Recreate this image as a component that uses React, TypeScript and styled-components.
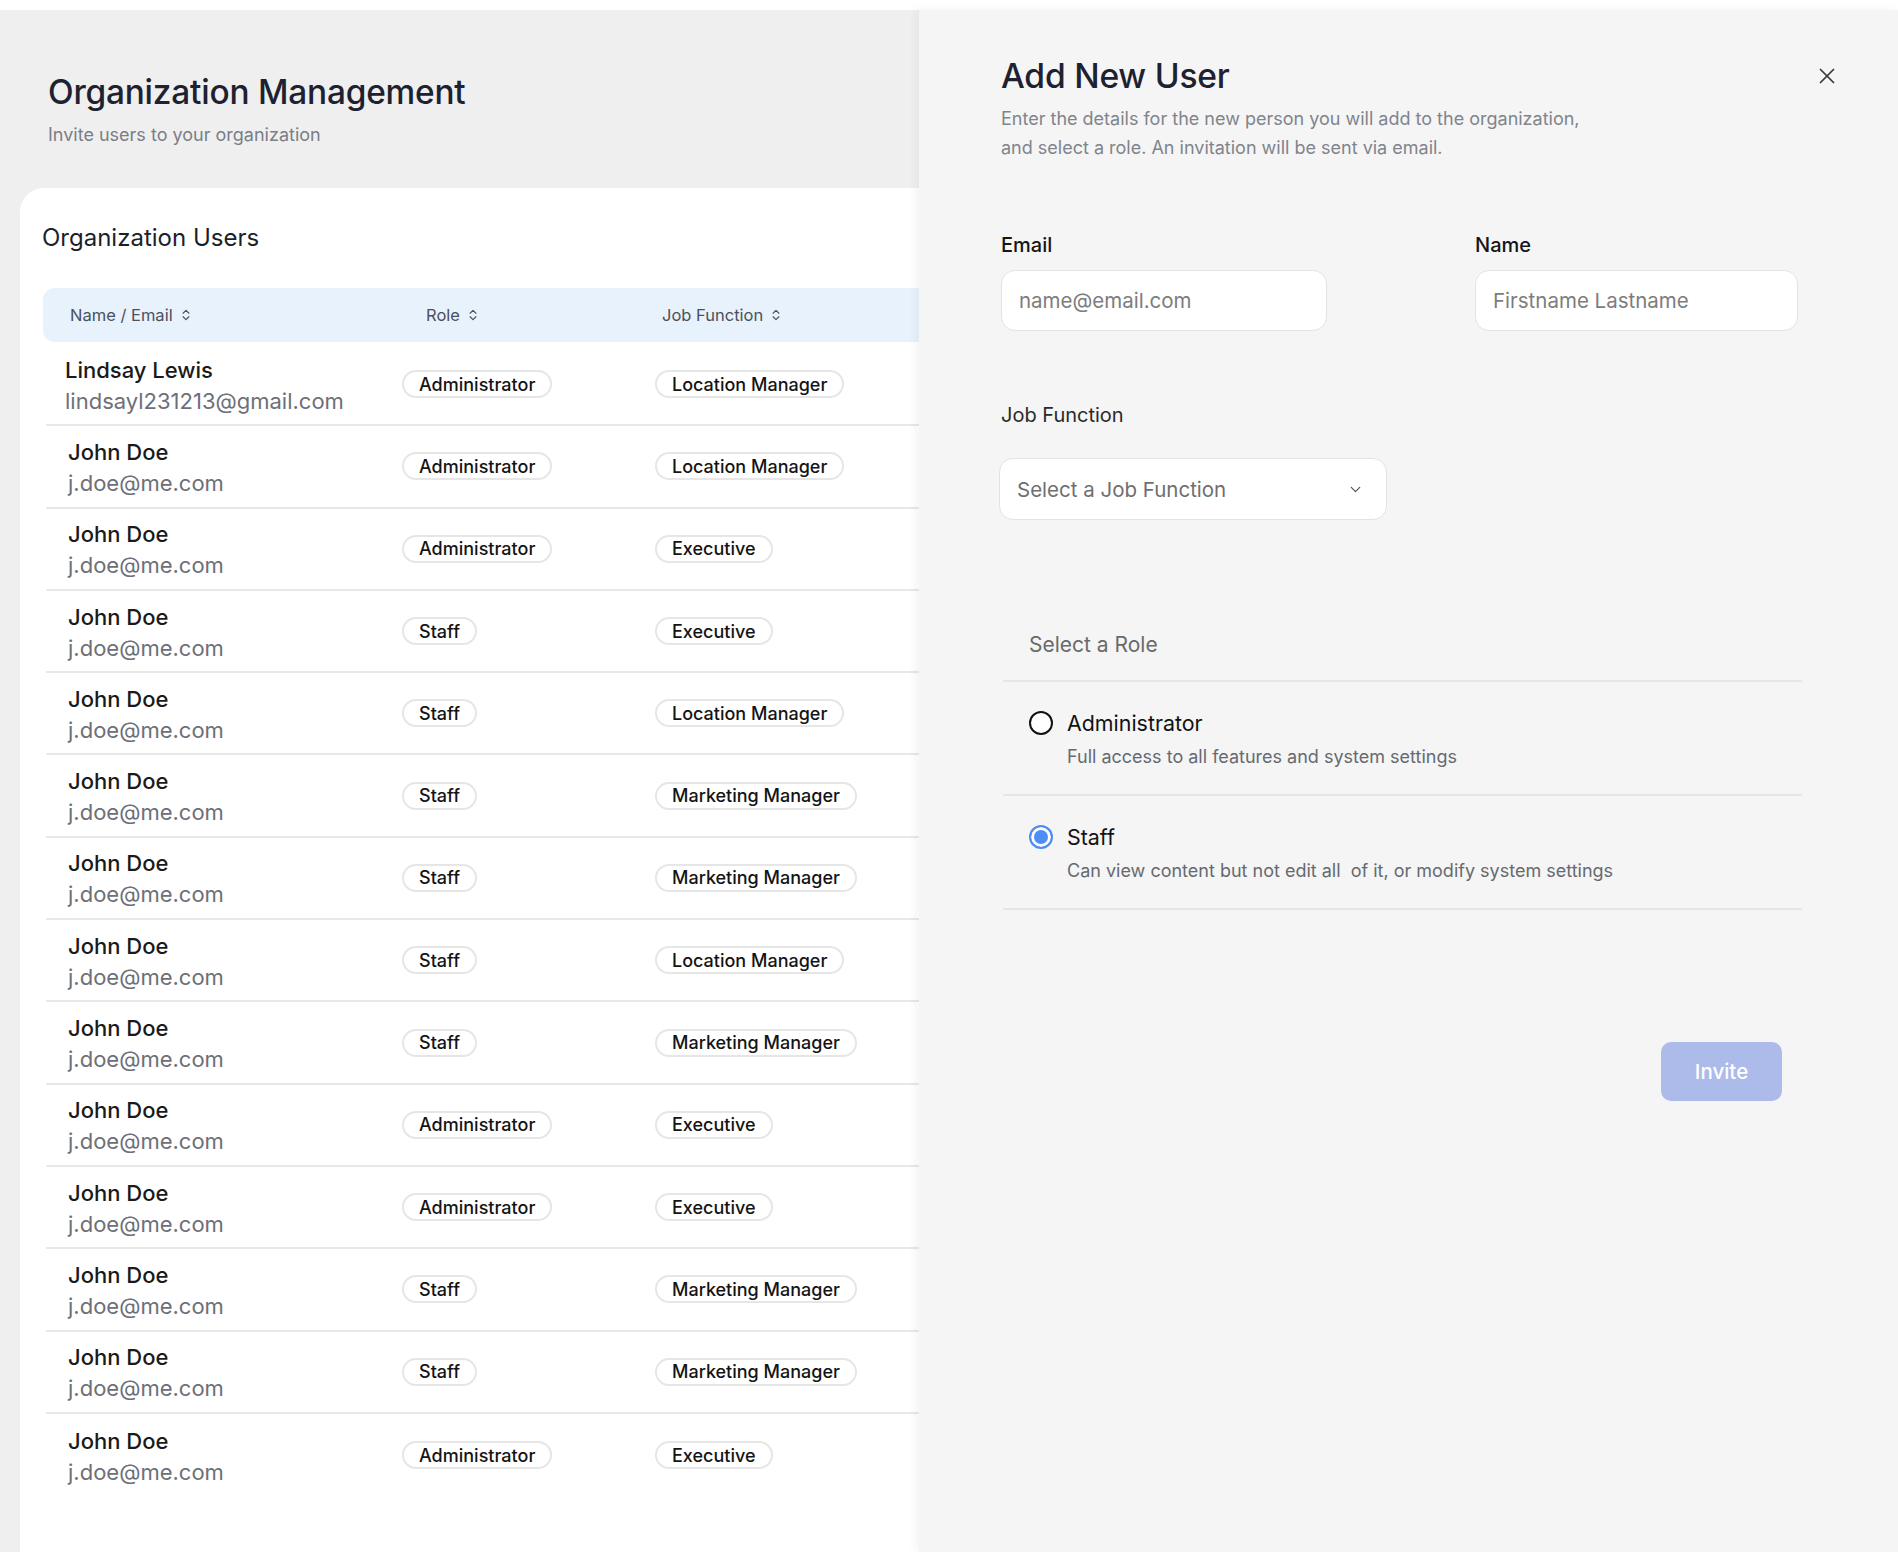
import React from "react";
import styled, { createGlobalStyle } from "styled-components";
import { ChevronsUpDown, ChevronDown, X } from "lucide-react";

const GlobalStyle = createGlobalStyle`
  html, body { margin: 0; padding: 0; background: #ffffff; }
  body { font-family: Inter, "Noto Sans", Arial, sans-serif; color: #1a1a1a; }
  * { box-sizing: border-box; }
`;

const Page = styled.div`
  padding-top: 10px;
  background: #ffffff;
  height: 100vh;
  overflow: hidden;
`;

const Layout = styled.div`
  display: flex;
  height: 100%;
`;

const Main = styled.main`
  width: 919px;
  flex: none;
  background: #efefef;
  display: flex;
  flex-direction: column;
`;

const PageHeader = styled.header`
  padding: 61px 0 0 48px;
`;

const PageTitle = styled.h1`
  margin: 0;
  font-size: 33.4px;
  line-height: 42px;
  font-weight: 500;
  color: #1d2130;
  letter-spacing: -0.2px;
`;

const PageSubtitle = styled.p`
  margin: 10px 0 0;
  font-size: 18px;
  line-height: 24px;
  color: #7a7e87;
`;

const UsersCard = styled.section`
  margin: 41px 0 0 20px;
  flex: 1;
  background: #ffffff;
  border-top-left-radius: 24px;
  padding: 35px 0 0 22px;
`;

const CardTitle = styled.h2`
  margin: 0;
  font-size: 24px;
  line-height: 30px;
  font-weight: 400;
  color: #1c1f2a;
`;

const Table = styled.div`
  margin-top: 35px;
`;

const HeaderRow = styled.div`
  margin-left: 1px;
  height: 54px;
  margin-bottom: 2px;
  background: #e8f2fc;
  border-radius: 12px 0 0 12px;
  display: grid;
  grid-template-columns: 356px 236px 1fr;
  align-items: center;
  padding-left: 27px;
`;

const HeaderCell = styled.div`
  display: flex;
  align-items: center;
  gap: 6px;
  font-size: 16.5px;
  color: #4b505c;
  svg { color: #4b505c; }
`;

const Row = styled.div<{ $first?: boolean; $last?: boolean }>`
  margin-left: 4px;
  height: 82.3px;
  display: grid;
  grid-template-columns: ${(p) => (p.$first ? "337px" : "334px")} 253px 1fr;
  align-items: center;
  padding-left: ${(p) => (p.$first ? "19px" : "22px")};
  border-bottom: ${(p) => (p.$last ? "none" : "2px solid #e8e8e8")};
`;

const NameBlock = styled.div`
  display: flex;
  flex-direction: column;
  padding-top: 3px;
`;

const UserName = styled.span`
  font-size: 22px;
  line-height: 31px;
  font-weight: 500;
  color: #1a1a1a;
`;

const UserEmail = styled.span`
  font-size: 22px;
  line-height: 31px;
  color: #6d7078;
`;

const Badge = styled.span`
  justify-self: start;
  display: inline-flex;
  align-items: center;
  height: 28px;
  padding: 0 15px;
  border: 2px solid #e6e6e6;
  border-radius: 999px;
  font-size: 18px;
  font-weight: 500;
  color: #141414;
  white-space: nowrap;
`;

const Drawer = styled.aside`
  flex: 1;
  background: #f5f5f5;
  box-shadow: -3px 0 10px rgba(0, 0, 0, 0.05);
  padding: 45px 58px 0 82px;
  position: relative;
  z-index: 1;
`;

const DrawerHeader = styled.div`
  display: flex;
  justify-content: space-between;
  align-items: flex-start;
`;

const DrawerTitle = styled.h2`
  margin: 0;
  font-size: 33.6px;
  line-height: 42px;
  font-weight: 500;
  color: #1d2130;
  letter-spacing: -0.2px;
`;

const CloseButton = styled.button`
  width: 26px;
  height: 42px;
  padding: 0;
  border: none;
  background: transparent;
  display: flex;
  align-items: center;
  justify-content: center;
  color: #3a3a3a;
  cursor: pointer;
`;

const DrawerDesc = styled.p`
  margin: 7px 0 0;
  font-size: 18px;
  line-height: 29px;
  color: #80848c;
`;

const FormBody = styled.div`
  width: 800px;
`;

const FieldGrid = styled.div`
  margin-top: 70px;
  display: grid;
  grid-template-columns: 326px 323px;
  column-gap: 148px;
`;

const Field = styled.div`
  display: flex;
  flex-direction: column;
`;

const FieldLabel = styled.label<{ $muted?: boolean }>`
  font-size: 20px;
  line-height: 26px;
  font-weight: ${(p) => (p.$muted ? 400 : 500)};
  color: ${(p) => (p.$muted ? "#2a2a2a" : "#151515")};
`;

const TextInput = styled.input`
  margin-top: 12px;
  height: 61px;
  width: 100%;
  border: 1.5px solid #e3e3e3;
  border-radius: 14px;
  background: #ffffff;
  padding: 0 17px;
  font-family: inherit;
  font-size: 20.5px;
  color: #1a1a1a;
  outline: none;
  &::placeholder { color: #7d7d7d; }
`;

const JobField = styled(Field)`
  margin-top: 71px;
`;

const SelectBox = styled.div`
  margin: 30px 0 0 -2px;
  width: 388px;
  height: 62px;
  border: 1.5px solid #e3e3e3;
  border-radius: 14px;
  background: #ffffff;
  padding: 0 22px 0 17px;
  display: flex;
  align-items: center;
  justify-content: space-between;
  font-size: 20.5px;
  color: #6f6f6f;
  svg { color: #4a4a5a; }
`;

const RoleGroup = styled.div`
  margin-top: 88px;
  margin-left: 2px;
  width: 799px;
`;

const RoleHeader = styled.div`
  padding: 24px 26px 22px;
  border-bottom: 2px solid #e6e6e6;
  font-size: 21px;
  line-height: 26px;
  color: #6a6a6a;
`;

const RoleOption = styled.div`
  padding: 28px 26px 25px;
  border-bottom: 2px solid #e6e6e6;
`;

const RoleTop = styled.div`
  display: flex;
  align-items: center;
  gap: 14px;
`;

const Radio = styled.span<{ $checked?: boolean }>`
  width: 24px;
  height: 24px;
  flex: none;
  border-radius: 50%;
  border: 2px solid ${(p) => (p.$checked ? "#4d8df6" : "#121212")};
  background: ${(p) => (p.$checked ? "#4d8df6" : "#ffffff")};
  box-shadow: ${(p) => (p.$checked ? "inset 0 0 0 3px #ffffff" : "none")};
`;

const RoleName = styled.span`
  font-size: 21.4px;
  line-height: 26px;
  color: #121212;
`;

const RoleDesc = styled.div`
  margin: 9px 0 0 38px;
  font-size: 18px;
  line-height: 24px;
  color: #666a70;
`;

const Actions = styled.div`
  margin-top: 132px;
  padding-right: 19px;
  display: flex;
  justify-content: flex-end;
`;

const InviteButton = styled.button`
  width: 121px;
  height: 59px;
  border: none;
  border-radius: 10px;
  background: #adbbea;
  color: #ffffff;
  font-family: inherit;
  font-size: 20.5px;
  font-weight: 500;
`;

type User = { name: string; email: string; role: string; job: string };

const users: User[] = [
  { name: "Lindsay Lewis", email: "lindsayl231213@gmail.com", role: "Administrator", job: "Location Manager" },
  { name: "John Doe", email: "j.doe@me.com", role: "Administrator", job: "Location Manager" },
  { name: "John Doe", email: "j.doe@me.com", role: "Administrator", job: "Executive" },
  { name: "John Doe", email: "j.doe@me.com", role: "Staff", job: "Executive" },
  { name: "John Doe", email: "j.doe@me.com", role: "Staff", job: "Location Manager" },
  { name: "John Doe", email: "j.doe@me.com", role: "Staff", job: "Marketing Manager" },
  { name: "John Doe", email: "j.doe@me.com", role: "Staff", job: "Marketing Manager" },
  { name: "John Doe", email: "j.doe@me.com", role: "Staff", job: "Location Manager" },
  { name: "John Doe", email: "j.doe@me.com", role: "Staff", job: "Marketing Manager" },
  { name: "John Doe", email: "j.doe@me.com", role: "Administrator", job: "Executive" },
  { name: "John Doe", email: "j.doe@me.com", role: "Administrator", job: "Executive" },
  { name: "John Doe", email: "j.doe@me.com", role: "Staff", job: "Marketing Manager" },
  { name: "John Doe", email: "j.doe@me.com", role: "Staff", job: "Marketing Manager" },
  { name: "John Doe", email: "j.doe@me.com", role: "Administrator", job: "Executive" },
];

const roles = [
  { name: "Administrator", desc: "Full access to all features and system settings", checked: false },
  { name: "Staff", desc: "Can view content but not edit all \u00a0of it, or modify system settings", checked: true },
];

export default function App() {
  return (
    <>
      <GlobalStyle />
      <Page>
        <Layout>
          <Main>
            <PageHeader>
              <PageTitle>Organization Management</PageTitle>
              <PageSubtitle>Invite users to your organization</PageSubtitle>
            </PageHeader>
            <UsersCard>
              <CardTitle>Organization Users</CardTitle>
              <Table>
                <HeaderRow>
                  <HeaderCell>Name / Email <ChevronsUpDown size={14} strokeWidth={2} /></HeaderCell>
                  <HeaderCell>Role <ChevronsUpDown size={14} strokeWidth={2} /></HeaderCell>
                  <HeaderCell>Job Function <ChevronsUpDown size={14} strokeWidth={2} /></HeaderCell>
                </HeaderRow>
                {users.map((u, i) => (
                  <Row key={i} $first={i === 0} $last={i === users.length - 1}>
                    <NameBlock>
                      <UserName>{u.name}</UserName>
                      <UserEmail>{u.email}</UserEmail>
                    </NameBlock>
                    <Badge>{u.role}</Badge>
                    <Badge>{u.job}</Badge>
                  </Row>
                ))}
              </Table>
            </UsersCard>
          </Main>
          <Drawer>
            <DrawerHeader>
              <DrawerTitle>Add New User</DrawerTitle>
              <CloseButton aria-label="Close">
                <X size={26} strokeWidth={1.6} />
              </CloseButton>
            </DrawerHeader>
            <DrawerDesc>
              Enter the details for the new person you will add to the organization,
              <br />
              and select a role. An invitation will be sent via email.
            </DrawerDesc>
            <FormBody>
              <FieldGrid>
                <Field>
                  <FieldLabel>Email</FieldLabel>
                  <TextInput placeholder="name@email.com" />
                </Field>
                <Field>
                  <FieldLabel>Name</FieldLabel>
                  <TextInput placeholder="Firstname Lastname" />
                </Field>
              </FieldGrid>
              <JobField>
                <FieldLabel $muted>Job Function</FieldLabel>
                <SelectBox>
                  <span>Select a Job Function</span>
                  <ChevronDown size={17} strokeWidth={1.6} />
                </SelectBox>
              </JobField>
              <RoleGroup>
                <RoleHeader>Select a Role</RoleHeader>
                {roles.map((r) => (
                  <RoleOption key={r.name}>
                    <RoleTop>
                      <Radio $checked={r.checked} />
                      <RoleName>{r.name}</RoleName>
                    </RoleTop>
                    <RoleDesc>{r.desc}</RoleDesc>
                  </RoleOption>
                ))}
              </RoleGroup>
              <Actions>
                <InviteButton>Invite</InviteButton>
              </Actions>
            </FormBody>
          </Drawer>
        </Layout>
      </Page>
    </>
  );
}
